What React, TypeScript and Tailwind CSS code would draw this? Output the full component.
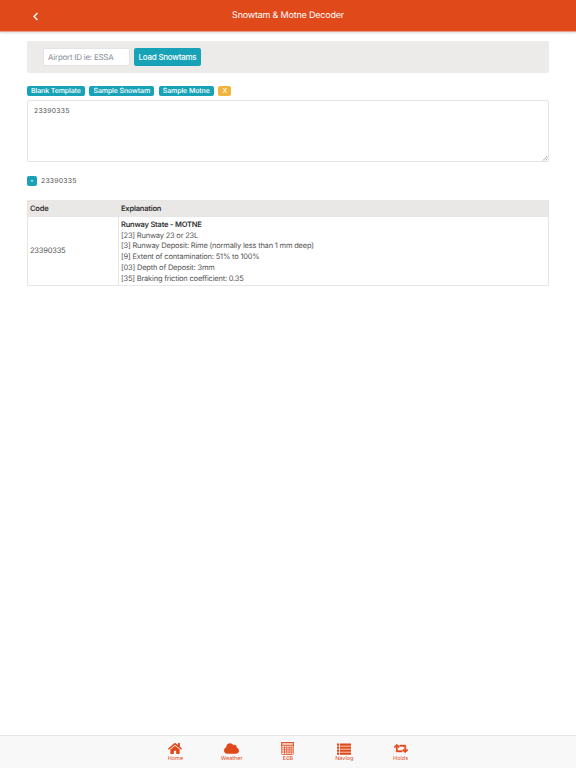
import React from 'react';
import { FaHome, FaCloud, FaRetweet, FaChevronLeft } from 'react-icons/fa';

const CalcIcon = () => (
    <svg viewBox="0 0 14 14" className="w-[13px] h-[13px]" fill="none" stroke="#e0491a" strokeWidth="0.8">
        <rect x="0.7" y="0.5" width="12.6" height="13" rx="1" />
        <rect x="0.7" y="0.5" width="12.6" height="3.5" fill="#e0491a" fillOpacity="0.3" />
        <path d="M1 6.3h12M1 8.5h12M1 10.8h12M3.7 4.5v9M6.2 4.5v9M8.7 4.5v9M11 4.5v9" />
    </svg>
);

const ListIcon = () => (
    <svg viewBox="0 0 14 12" className="w-[14px] h-[12px]" fill="#e0491a">
        <path d="M0 0.5h2.2v2.2H0zM3 0.5h11v2.2H3zM0 3.5h2.2v2.2H0zM3 3.5h11v2.2H3zM0 6.5h2.2v2.2H0zM3 6.5h11v2.2H3zM0 9.5h2.2v2.2H0zM3 9.5h11v2.2H3z" />
    </svg>
);

const tabs = [
    { label: 'Home', icon: <FaHome className="w-[14px] h-[13px]" /> },
    { label: 'Weather', icon: <FaCloud className="w-[15px] h-[13px]" /> },
    { label: 'E6B', icon: <CalcIcon /> },
    { label: 'Navlog', icon: <ListIcon /> },
    { label: 'Holds', icon: <FaRetweet className="w-[14px] h-[13px] stroke-[20px]" /> },
];

const badges = ['Blank Template', 'Sample Snowtam', 'Sample Motne'];

export default function App() {
    return (
        <div className="h-[768px] w-[576px] flex flex-col bg-white text-[#555] font-['Inter',sans-serif] [text-rendering:geometricPrecision] antialiased overflow-hidden">
            <header className="h-8 shrink-0 bg-[#e0491a] border-b border-[#e9a08a] shadow-[0_1px_2px_rgba(0,0,0,0.15)] flex items-center relative">
                <FaChevronLeft className="absolute left-[32px] top-[12px] w-[7px] h-[9px] text-white" />
                <h1 className="w-full text-center text-white text-[9px] tracking-[-0.2px]">Snowtam &amp; Motne Decoder</h1>
            </header>

            <main className="flex-1 px-[27px] pt-[9px]">
                <div className="h-[32px] bg-[#ecebe9] rounded-[2px] flex items-center pl-[16px] gap-[4px]">
                    <div className="w-[87px] h-[18px] bg-white border border-[#e2e4e8] rounded-[2px] flex items-center pl-[4px] text-[8px] tracking-[-0.25px] text-[#868e96]">Airport ID ie: ESSA</div>
                    <button className="w-[67px] h-[18px] bg-[#17a2b8] rounded-[2px] text-white text-[8px] tracking-[-0.25px] font-medium whitespace-nowrap">Load Snowtams</button>
                </div>

                <div className="mt-[13px] flex gap-[4.7px] h-[9px]">
                    {badges.map((b) => (
                        <span key={b} className="px-[4px] h-[10px] leading-[10px] bg-[#17a2b8] rounded-[2px] text-white text-[7px] tracking-[-0.1px] font-medium">{b}</span>
                    ))}
                    <span className="w-[13px] h-[10px] leading-[10px] text-center bg-[#f0b43c] rounded-[2px] text-white text-[7px]">X</span>
                </div>

                <div className="mt-[5px] h-[62px] border border-[#e2e4e8] rounded-[2px] px-[6px] pt-[5px] text-[6.8px] tracking-[0.25px] relative">
                    23390335
                    <svg viewBox="0 0 6 6" className="absolute right-0 bottom-0 w-[6px] h-[6px]" stroke="#888" strokeWidth="0.7">
                        <path d="M1 5.5L5.5 1M3.5 5.5L5.5 3.5" />
                    </svg>
                </div>

                <div className="mt-[14px] flex items-center gap-[4px] h-[10px]">
                    <span className="w-[10px] h-[10px] bg-[#17a2b8] rounded-[2px] text-white text-[7px] font-bold flex items-center justify-center">-</span>
                    <span className="text-[6.8px] tracking-[0.25px]">23390335</span>
                </div>

                <table className="mt-[14px] w-full border-collapse text-[7.5px] tracking-[-0.2px]">
                    <thead>
                        <tr className="bg-[#e9e8e6] h-[16px] text-left text-[#333]">
                            <th className="w-[91px] pl-[2px] border border-[#e6e6e6] font-semibold">Code</th>
                            <th className="pl-[2px] border border-[#e6e6e6] font-semibold">Explanation</th>
                        </tr>
                    </thead>
                    <tbody>
                        <tr>
                            <td className="pl-[2px] border border-[#e6e6e6]">23390335</td>
                            <td className="pl-[2px] pt-[3px] pb-[1px] border border-[#e6e6e6] leading-[10.7px]">
                                <div className="font-semibold text-[#333]">Runway State - MOTNE</div>
                                <div>[23] Runway 23 or 23L</div>
                                <div>[3] Runway Deposit: Rime (normally less than 1 mm deep)</div>
                                <div>[9] Extent of contamination: 51% to 100%</div>
                                <div>[03] Depth of Deposit: 3mm</div>
                                <div>[35] Braking friction coefficient: 0.35</div>
                            </td>
                        </tr>
                    </tbody>
                </table>
            </main>

            <nav className="h-[33px] shrink-0 bg-[#f8f8f8] border-t border-[#e5e5e5] flex justify-center text-[#e0491a]">
                {tabs.map((t) => (
                    <div key={t.label} className="w-[56.3px] flex flex-col items-center pt-[6px]">
                        <div className="h-[13px] flex items-center">{t.icon}</div>
                        <span className="text-[5.5px] leading-[8px] mt-[-0.5px]">{t.label}</span>
                    </div>
                ))}
            </nav>
        </div>
    );
}
